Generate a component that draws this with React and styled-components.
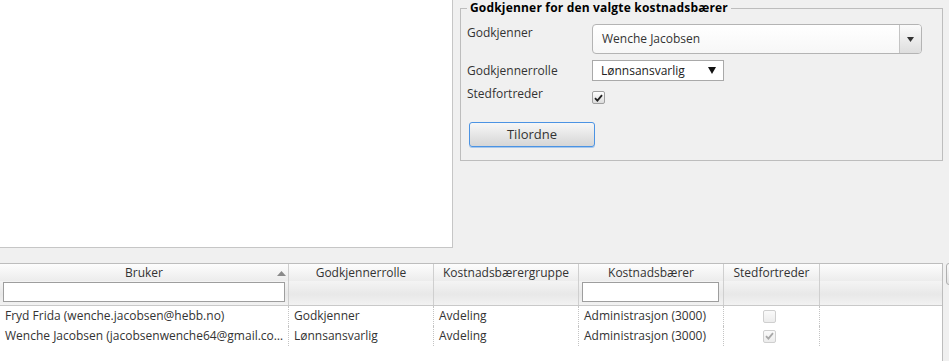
import React from 'react';
import styled, { createGlobalStyle } from 'styled-components';

const Global = createGlobalStyle`
  html, body { margin: 0; padding: 0; background: #f0f0f0; }
  body {
    font-family: "Open Sans", "Noto Sans", sans-serif;
    font-size: 12px;
    color: #333;
    overflow: hidden;
  }
  #root { width: 949px; height: 361px; overflow: hidden; }
`;

const Page = styled.div`
  width: 949px;
  height: 361px;
  display: flex;
  flex-direction: column;
`;

const Top = styled.div`
  display: flex;
  align-items: flex-start;
  height: 248px;
`;

const Blank = styled.div`
  width: 452px;
  height: 247px;
  background: #fff;
  border-right: 1px solid #c6c6c6;
  border-bottom: 1px solid #c6c6c6;
`;

const Fieldset = styled.fieldset`
  margin: 0 0 0 7px;
  width: 483px;
  height: 161px;
  box-sizing: border-box;
  border: 1px solid #bdbdbd;
  padding: 0 6px 13px 6px;
  min-width: 0;
`;

const Legend = styled.legend`
  padding: 0 3px;
  font-weight: 700;
  color: #000;
  line-height: 16px;
  font-size: 12px;
  letter-spacing: 0.18px;
`;

const Form = styled.div`
  display: flex;
  flex-direction: column;
  margin-top: 8px;
`;

const Row = styled.div`
  display: grid;
  grid-template-columns: 125px 1fr;
  align-items: ${p => p.$align || 'start'};
  margin-top: ${p => p.$mt || 0}px;
`;

const Label = styled.div`
  line-height: 16px;
  padding-top: ${p => p.$pt || 0}px;
  color: #333;
`;

const BigSelect = styled.div`
  width: 330px;
  height: 30px;
  box-sizing: border-box;
  border: 1px solid #b4b4b4;
  border-radius: 4px;
  display: flex;
  background: linear-gradient(#ffffff, #f7f7f7);
  overflow: hidden;
`;

const BigValue = styled.div`
  flex: 1;
  padding-left: 9px;
  line-height: 28px;
  color: #333;
`;

const BigArrow = styled.div`
  width: 21px;
  border-left: 1px solid #c4c4c4;
  background: linear-gradient(#fbfbfb, #dedede);
  display: flex;
  align-items: center;
  justify-content: center;
`;

const SmallSelect = styled.div`
  width: 132px;
  height: 21px;
  box-sizing: border-box;
  border: 1px solid #a9a9a9;
  background: #fff;
  display: flex;
  align-items: center;
  justify-content: space-between;
  padding: 0 7px 0 8px;
  color: #222;
`;

const Box = styled.span`
  display: inline-flex;
  align-items: center;
  justify-content: center;
  width: 13px;
  height: 13px;
  box-sizing: border-box;
  border: 1px solid ${p => (p.$disabled ? '#cfcfcf' : '#a0a0a0')};
  border-radius: 2px;
  background: ${p => (p.$disabled ? 'linear-gradient(#fafafa, #ececec)' : 'linear-gradient(#ffffff, #dcdcdc)')};
  margin-top: ${p => p.$mt || 0}px;
`;

const Button = styled.button`
  margin: 16px 0 0 2px;
  width: 126px;
  height: 25px;
  box-sizing: border-box;
  border: 1px solid #4b93e3;
  border-radius: 3px;
  background: linear-gradient(#f7f7f7, #d6d6d6);
  box-shadow: 0 1px 0 #a8c8ec;
  font-family: "Open Sans", "Noto Sans", sans-serif;
  font-size: 13px;
  color: #333;
  padding: 0;
  line-height: 22px;
`;

const GridWrap = styled.div`
  display: flex;
  margin-top: 15px;
  flex: 1;
  gap: 3px;
`;

const Grid = styled.div`
  width: 943px;
  flex: none;
  box-sizing: border-box;
  background: #fff;
  border-top: 1px solid #bdbdbd;
  border-right: 1px solid #bdbdbd;
  display: flex;
  flex-direction: column;
`;

const cols = '289px 145px 145px 145px 96px 1fr';

const HeadRow = styled.div`
  display: grid;
  grid-template-columns: ${cols};
  border-bottom: 1px solid #c9c9c9;
`;

const HeadCell = styled.div`
  display: flex;
  flex-direction: column;
  border-right: ${p => (p.$last ? 'none' : '1px solid #cfcfcf')};
`;

const Title = styled.div`
  position: relative;
  height: 17px;
  line-height: 17px;
  text-align: center;
  background: linear-gradient(#fdfdfd, #ececec);
  color: #333;
`;

const SortArrow = styled.svg`
  position: absolute;
  right: 2px;
  top: 7px;
`;

const Filter = styled.div`
  height: 24px;
  box-sizing: border-box;
  padding: 1px 0 0 3px;
  background: linear-gradient(#f4f4f4, #e8e8e8 55%, #f2f2f2);
`;

const FilterInput = styled.div`
  width: ${p => p.$w}px;
  height: 20px;
  box-sizing: border-box;
  border: 1px solid #9e9e9e;
  background: #fff;
`;

const BodyRow = styled.div`
  display: grid;
  grid-template-columns: ${cols};
  height: 20px;
`;

const Cell = styled.div`
  border-right: ${p => (p.$last ? 'none' : '1px dotted #c4c4c4')};
  padding-left: ${p => (p.$center ? 0 : 5)}px;
  padding-right: 4px;
  line-height: 20px;
  white-space: nowrap;
  overflow: hidden;
  text-overflow: ellipsis;
  color: #333;
  display: ${p => (p.$center ? 'flex' : 'block')};
  justify-content: center;
  align-items: center;
`;

const Tab = styled.div`
  width: 12px;
  height: 22px;
  flex: none;
  box-sizing: border-box;
  border: 1px solid #b0b0b0;
  border-radius: 3px;
  background: linear-gradient(#fafafa, #e2e2e2);
`;

const Tri = ({ w = 7, h = 5, color = '#222' }) => (
  <svg width={w} height={h} viewBox={`0 0 ${w} ${h}`}>
    <polygon points={`0,0 ${w},0 ${w / 2},${h}`} fill={color} />
  </svg>
);

const Check = ({ color }) => (
  <svg width="9" height="8" viewBox="0 0 9 8">
    <path d="M1 4.2 L3.4 6.6 L8 1.2" stroke={color} strokeWidth="1.8" fill="none" />
  </svg>
);

const CheckBox = ({ checked, disabled, mt }) => (
  <Box $disabled={disabled} $mt={mt}>
    {checked && <Check color={disabled ? '#a8a8a8' : '#222'} />}
  </Box>
);

const headers = [
  { t: 'Bruker', filter: 282, sort: true },
  { t: 'Godkjennerrolle' },
  { t: 'Kostnadsbærergruppe' },
  { t: 'Kostnadsbærer', filter: 137 },
  { t: 'Stedfortreder' },
  { t: '', last: true },
];

const rows = [
  {
    user: 'Fryd Frida (wenche.jacobsen@hebb.no)',
    role: 'Godkjenner',
    group: 'Avdeling',
    kb: 'Administrasjon (3000)',
    sted: false,
  },
  {
    user: 'Wenche Jacobsen (jacobsenwenche64@gmail.com)',
    role: 'Lønnsansvarlig',
    group: 'Avdeling',
    kb: 'Administrasjon (3000)',
    sted: true,
  },
];

export default function App() {
  return (
    <Page>
      <Global />
      <Top>
        <Blank />
        <Fieldset>
          <Legend>Godkjenner for den valgte kostnadsbærer</Legend>
          <Form>
            <Row>
              <Label $pt={1}>Godkjenner</Label>
              <BigSelect>
                <BigValue>Wenche Jacobsen</BigValue>
                <BigArrow>
                  <Tri w={7} h={5} color="#333" />
                </BigArrow>
              </BigSelect>
            </Row>
            <Row $mt={6} $align="center">
              <Label>Godkjennerrolle</Label>
              <SmallSelect>
                <span>Lønnsansvarlig</span>
                <Tri w={8} h={7} color="#111" />
              </SmallSelect>
            </Row>
            <Row $mt={5}>
              <Label>Stedfortreder</Label>
              <div>
                <CheckBox checked mt={5} />
              </div>
            </Row>
            <div>
              <Button>Tilordne</Button>
            </div>
          </Form>
        </Fieldset>
      </Top>
      <GridWrap>
        <Grid>
          <HeadRow>
            {headers.map((h, i) => (
              <HeadCell key={i} $last={h.last}>
                <Title>
                  {h.t}
                  {h.sort && (
                    <SortArrow width="9" height="5" viewBox="0 0 9 5">
                      <polygon points="0,5 9,5 4.5,0" fill="#8a8a8a" />
                    </SortArrow>
                  )}
                </Title>
                <Filter>{h.filter && <FilterInput $w={h.filter} />}</Filter>
              </HeadCell>
            ))}
          </HeadRow>
          {rows.map((r, i) => (
            <BodyRow key={i}>
              <Cell>{r.user}</Cell>
              <Cell>{r.role}</Cell>
              <Cell>{r.group}</Cell>
              <Cell>{r.kb}</Cell>
              <Cell $center>
                <CheckBox checked={r.sted} disabled />
              </Cell>
              <Cell $last />
            </BodyRow>
          ))}
        </Grid>
        <Tab />
      </GridWrap>
    </Page>
  );
}
